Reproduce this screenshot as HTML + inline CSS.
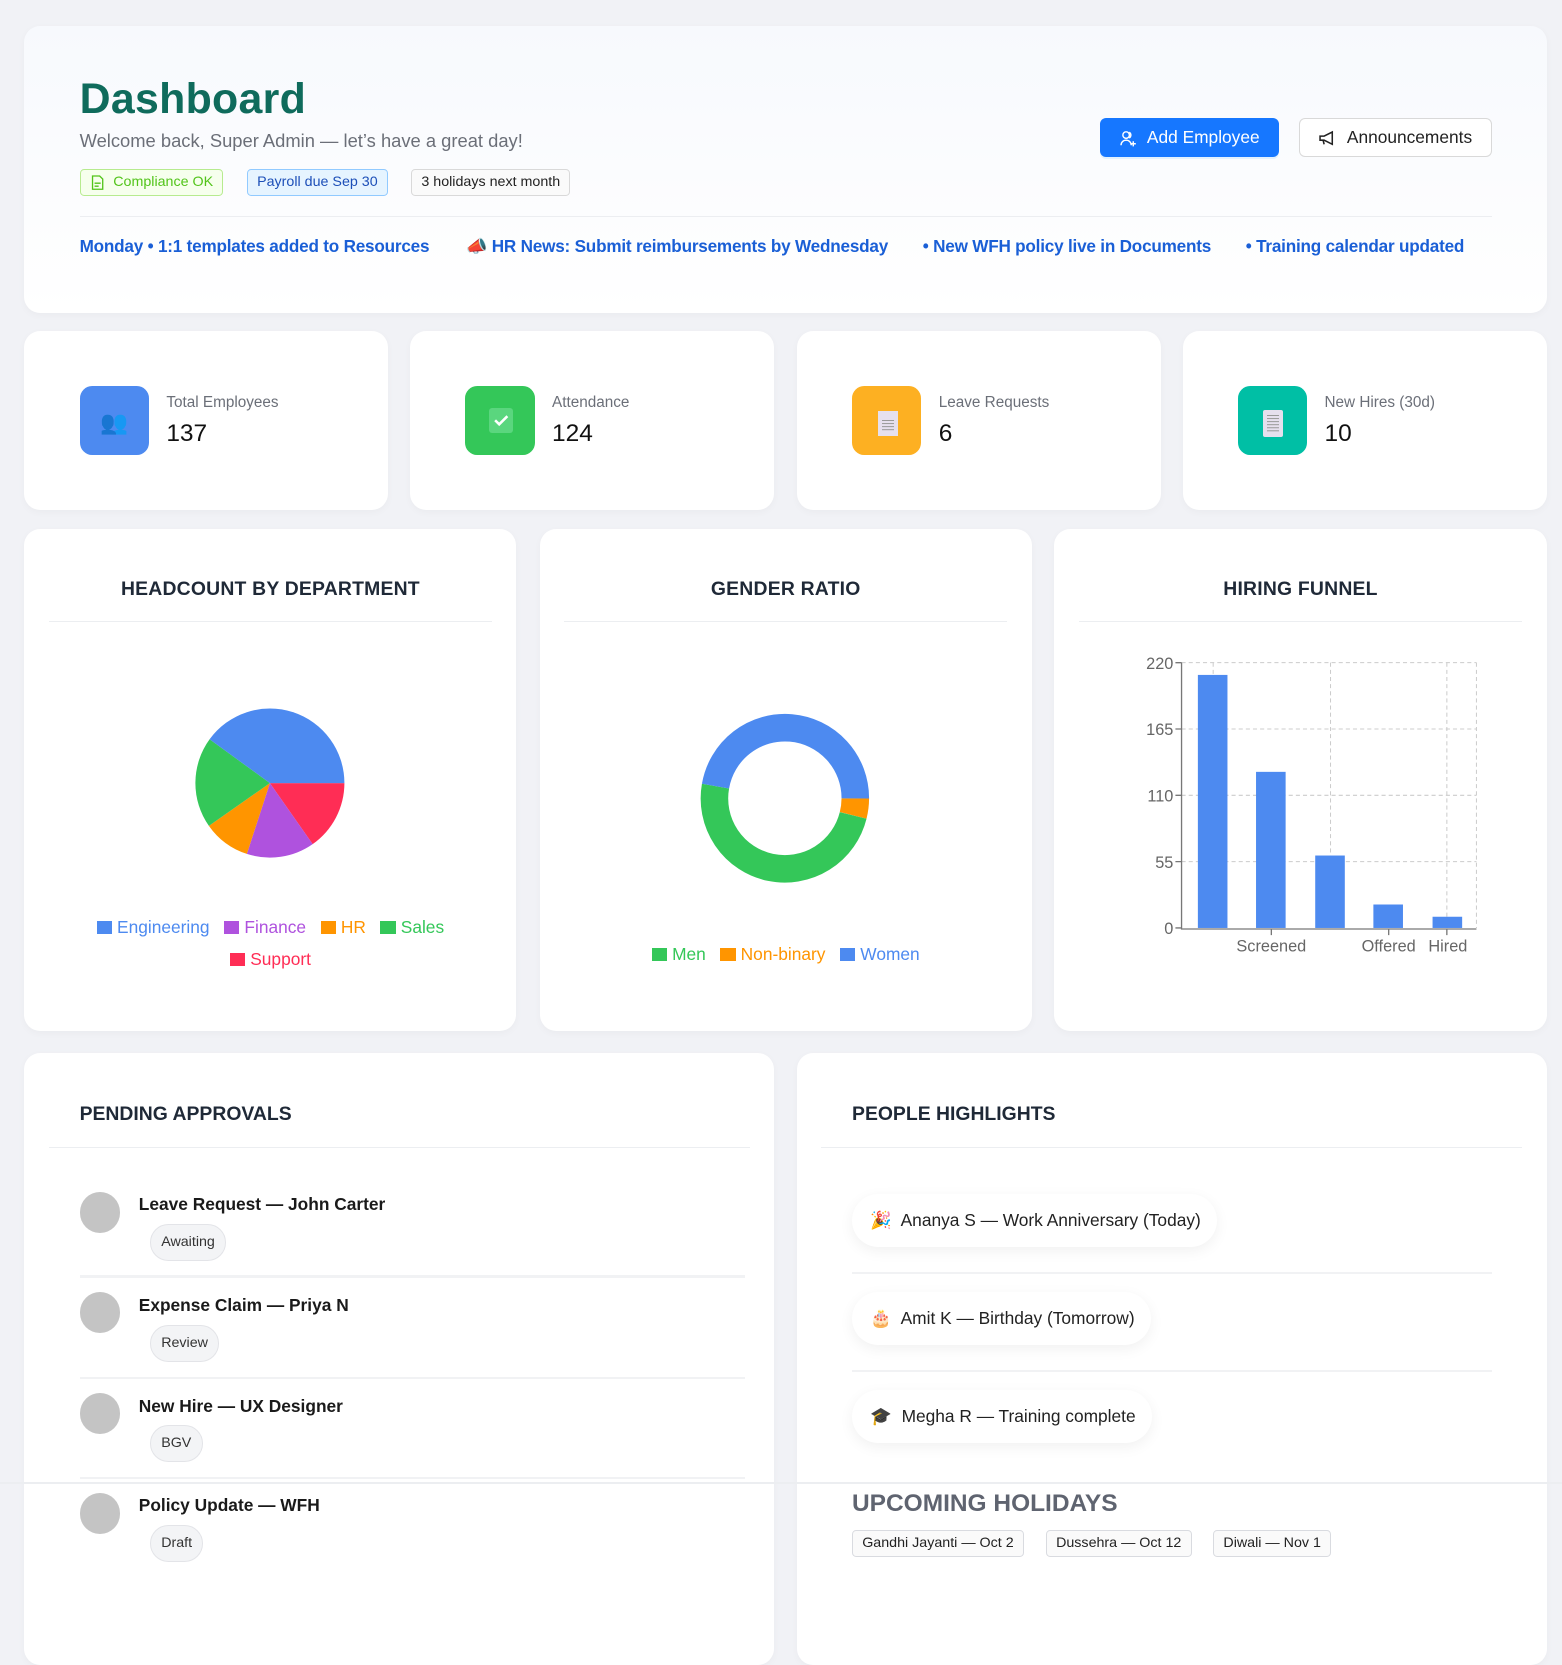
<!DOCTYPE html>
<html><head><meta charset="utf-8">
<style>
*{box-sizing:border-box;margin:0;padding:0}
html,body{width:1562px;height:1600px;overflow:hidden;background:#f1f2f6}
#w{position:absolute;left:0;top:0;width:1531px;height:1568px;zoom:1.0204;font-family:"Liberation Sans","DejaVu Sans",sans-serif;color:#222}
.a{position:absolute}
.card{position:absolute;background:#fff;border-radius:16px;box-shadow:0 2px 8px rgba(0,0,0,.03)}
.t{position:absolute;white-space:nowrap}
.badge{position:absolute;top:166px;height:26px;border-radius:4px;font-size:14px;line-height:24px;padding:0 9px;border:1px solid}
.ic{position:absolute;left:54px;top:54px;width:68px;height:68px;border-radius:12px}
.lab{position:absolute;left:139px;top:62px;font-size:15px;color:#6b6f78}
.num{position:absolute;left:139px;top:88px;font-size:24px;color:#111}
.ct{position:absolute;top:48px;left:0;right:0;text-align:center;font-size:19px;font-weight:bold;color:#1f2937;letter-spacing:.2px}
.hr{position:absolute;height:1px;background:#eceef1}
.av{position:absolute;left:54px;width:40px;height:40px;border-radius:50%;background:#c4c4c4}
.pt{position:absolute;left:112px;font-size:17px;font-weight:bold;color:#1a1a1a}
.chip{position:absolute;left:123px;height:36px;border-radius:18px;background:#f3f4f6;border:1px solid #e3e4e8;font-size:14px;line-height:34px;padding:0 10px;color:#333}
.pill{position:absolute;left:54px;height:52px;border-radius:26px;background:#fff;box-shadow:0 4px 14px rgba(0,0,0,.06);font-size:17px;line-height:52px;padding:0 16px 0 18px;color:#222}
.hol{position:absolute;top:467px;height:27px;border:1px solid #d9dbe0;border-radius:4px;background:#fafafa;font-size:14px;line-height:25px;padding:0 9px;color:#222}
.lg{display:inline-block;width:15px;height:13px;margin-right:5px;vertical-align:-1px}
</style></head><body><div id="w">

<div class="card" style="left:24px;top:25px;width:1492px;height:282px;background:linear-gradient(#f7f9fd,#fff)">
  <div class="t" style="left:54px;top:49px;font-size:42px;font-weight:bold;color:#0f6b5c;letter-spacing:.3px">Dashboard</div>
  <div class="t" style="left:54px;top:102px;font-size:18px;color:#6b6f78">Welcome back, Super Admin — let’s have a great day!</div>
  <div class="badge" style="left:54px;top:141px;color:#52c41a;border-color:#b7eb8f;background:#f6ffed;padding-left:32px"><svg class="a" style="left:10px;top:5px" width="13" height="15" viewBox="0 0 13 15"><path d="M1.5 1h7l3 3v10h-10z M3.5 8h6 M3.5 11h4" fill="none" stroke="#52c41a" stroke-width="1.3"/></svg>Compliance OK</div>
  <div class="badge" style="left:218px;top:141px;color:#1d4fb8;border-color:#91caff;background:#e6f4ff">Payroll due Sep 30</div>
  <div class="badge" style="left:379px;top:141px;color:#222;border-color:#d9d9d9;background:#fafafa">3 holidays next month</div>
  <div class="a" style="left:1054px;top:91px;width:175px;height:38px;border-radius:6px;background:#1677ff;color:#fff;font-size:17px;line-height:38px;padding-left:46px;box-shadow:0 2px 0 rgba(5,145,255,.1)"><svg class="a" style="left:20px;top:11px" width="17" height="17" viewBox="0 0 17 17" fill="none" stroke="#fff" stroke-width="1.4"><circle cx="6" cy="5" r="3.2"/><path d="M1 15c0-3 2.2-5 5-5s5 2 5 5"/><path d="M9 2.2a3.2 3.2 0 0 1 0 5.6"/><path d="M13 11v5M10.5 13.5h5"/></svg>Add Employee</div>
  <div class="a" style="left:1249px;top:91px;width:189px;height:38px;border-radius:6px;background:#fff;border:1px solid #d9d9d9;color:#222;font-size:17px;line-height:36px;padding-left:46px"><svg class="a" style="left:18px;top:10px" width="18" height="16" viewBox="0 0 18 16" fill="none" stroke="#222" stroke-width="1.5"><path d="M2 6h4l8-4v12l-8-4H2z"/><path d="M5 10l1 4"/></svg>Announcements</div>
  <div class="hr" style="left:54px;top:187px;width:1384px"></div>
  <div class="t" style="left:54px;top:206px;font-size:16.8px;font-weight:bold;color:#1a5fd6;letter-spacing:-.2px">Monday • 1:1 templates added to Resources<span style="display:inline-block;width:36px"></span><span style="color:#f08a3c">&#x1F4E3;</span> HR News: Submit reimbursements by Wednesday<span style="display:inline-block;width:34px"></span>• New WFH policy live in Documents<span style="display:inline-block;width:34px"></span>• Training calendar updated</div>
</div>

<div class="card" style="left:24px;top:324px;width:356px;height:176px"><div class="ic" style="background:#4d8af0"><div class="a" style="left:20px;top:24px;font-size:22px;color:#5b2b8c">&#x1F465;</div></div><div class="lab">Total Employees</div><div class="num">137</div></div>
<div class="card" style="left:402px;top:324px;width:357px;height:176px"><div class="ic" style="background:#34c759"><div class="a" style="left:23px;top:22px;width:24px;height:24px;border-radius:3px;background:#5ad67e"><svg width="24" height="24"><path d="M6 12l4 4 8-8" fill="none" stroke="#fff" stroke-width="2.5"/></svg></div></div><div class="lab">Attendance</div><div class="num">124</div></div>
<div class="card" style="left:781px;top:324px;width:357px;height:176px"><div class="ic" style="background:#fdb022"><div class="a" style="left:25px;top:25px;width:20px;height:24px;background:#e6e0ee"><div class="a" style="left:4px;top:9px;width:12px;height:1px;background:#999;box-shadow:0 3px #999,0 6px #999,0 9px #999"></div></div></div><div class="lab">Leave Requests</div><div class="num">6</div></div>
<div class="card" style="left:1159px;top:324px;width:357px;height:176px"><div class="ic" style="background:#00bfa5"><div class="a" style="left:25px;top:24px;width:19px;height:26px;background:#e6e0ee;border-radius:2px"><div class="a" style="left:4px;top:5px;width:11px;height:1px;background:#999;box-shadow:0 3px #999,0 6px #999,0 9px #999,0 12px #999,0 15px #999"></div></div></div><div class="lab">New Hires (30d)</div><div class="num">10</div></div>

<div class="card" style="left:24px;top:518px;width:482px;height:492px">
  <div class="ct">HEADCOUNT BY DEPARTMENT</div>
  <div class="hr" style="left:24px;top:91px;width:434px"></div>
  <svg class="a" style="left:0;top:0" width="482" height="492" viewBox="24 518 482 492">
    <path d="M265 767L338 767A73 73 0 0 1 306.9 826.8Z" fill="#ff2d55"/>
    <path d="M265 767L306.9 826.8A73 73 0 0 1 242.4 836.4Z" fill="#af52de"/>
    <path d="M265 767L242.4 836.4A73 73 0 0 1 205.2 808.9Z" fill="#ff9500"/>
    <path d="M265 767L205.2 808.9A73 73 0 0 1 205.9 724.1Z" fill="#34c759"/>
    <path d="M265 767L205.9 724.1A73 73 0 0 1 338 767Z" fill="#4d8af0"/>
  </svg>
  <div class="t" style="left:0;right:0;top:376px;text-align:center;font-size:17px;line-height:31px;white-space:normal;padding:0 60px"><span style="color:#4d8af0"><i class="lg" style="background:#4d8af0"></i>Engineering</span>&nbsp;&nbsp; <span style="color:#af52de"><i class="lg" style="background:#af52de"></i>Finance</span>&nbsp;&nbsp; <span style="color:#ff9500"><i class="lg" style="background:#ff9500"></i>HR</span>&nbsp;&nbsp; <span style="color:#34c759"><i class="lg" style="background:#34c759"></i>Sales</span><br><span style="color:#ff2d55"><i class="lg" style="background:#ff2d55"></i>Support</span></div>
</div>

<div class="card" style="left:529px;top:518px;width:482px;height:492px">
  <div class="ct">GENDER RATIO</div>
  <div class="hr" style="left:24px;top:91px;width:434px"></div>
  <svg class="a" style="left:0;top:0" width="482" height="492" viewBox="529 518 482 492" fill="none" stroke-width="27">
    <path d="M838 782A69 69 0 0 1 835.9 798.7" stroke="#ff9500"/>
    <path d="M835.9 798.7A69 69 0 0 1 701 770" stroke="#34c759"/>
    <path d="M701 770A69 69 0 0 1 838 782" stroke="#4d8af0"/>
  </svg>
  <div class="t" style="left:0;right:0;top:407px;text-align:center;font-size:17px"><span style="color:#34c759"><i class="lg" style="background:#34c759"></i>Men</span>&nbsp;&nbsp; <span style="color:#ff9500"><i class="lg" style="background:#ff9500"></i>Non-binary</span>&nbsp;&nbsp; <span style="color:#4d8af0"><i class="lg" style="background:#4d8af0"></i>Women</span></div>
</div>

<div class="card" style="left:1033px;top:518px;width:483px;height:492px">
  <div class="ct">HIRING FUNNEL</div>
  <div class="hr" style="left:24px;top:91px;width:435px"></div>
  <svg class="a" style="left:0;top:0" width="483" height="492" viewBox="1033 518 483 492" font-family="Liberation Sans, sans-serif" font-size="16" fill="#666">
    <g stroke="#ccc" stroke-dasharray="4 3" stroke-width="1">
      <path d="M1158 649H1447M1158 714H1447M1158 779H1447M1158 844H1447"/>
      <path d="M1189 649V909M1304 649V909M1418 649V909M1447 649V909"/>
    </g>
    <g fill="#4d8af0"><rect x="1174" y="661" width="29" height="248"/><rect x="1231" y="756" width="29" height="153"/><rect x="1289" y="838" width="29" height="71"/><rect x="1346" y="886" width="29" height="23"/><rect x="1404" y="898" width="29" height="11"/></g>
    <g stroke="#777" stroke-width="1.3" fill="none"><path d="M1158 649V910H1447"/><path d="M1152 649h6M1152 714h6M1152 779h6M1152 844h6M1152 909h6M1246 910v6M1361 910v6M1418 910v6"/></g>
    <g text-anchor="end"><text x="1150" y="655">220</text><text x="1150" y="720">165</text><text x="1150" y="785">110</text><text x="1150" y="850">55</text><text x="1150" y="915">0</text></g>
    <g text-anchor="middle"><text x="1246" y="932">Screened</text><text x="1361" y="932">Offered</text><text x="1419" y="932">Hired</text></g>
  </svg>
</div>

<div class="card" style="left:24px;top:1032px;width:735px;height:600px">
  <div class="t" style="left:54px;top:49px;font-size:19px;font-weight:bold;color:#1f2937">PENDING APPROVALS</div>
  <div class="hr" style="left:24px;top:92px;width:687px"></div>
  <div class="av" style="top:136px"></div><div class="pt" style="top:138px">Leave Request — John Carter</div><div class="chip" style="top:168px">Awaiting</div>
  <div class="hr" style="left:54px;top:218px;width:652px;height:2px;background:#f1f2f4"></div>
  <div class="av" style="top:234px"></div><div class="pt" style="top:237px">Expense Claim — Priya N</div><div class="chip" style="top:267px">Review</div>
  <div class="hr" style="left:54px;top:317px;width:652px;height:2px;background:#f1f2f4"></div>
  <div class="av" style="top:333px"></div><div class="pt" style="top:336px">New Hire — UX Designer</div><div class="chip" style="top:365px">BGV</div>
  <div class="hr" style="left:54px;top:415px;width:652px;height:2px;background:#f1f2f4"></div>
  <div class="av" style="top:431px"></div><div class="pt" style="top:433px">Policy Update — WFH</div><div class="chip" style="top:463px">Draft</div>
</div>

<div class="card" style="left:781px;top:1032px;width:735px;height:600px">
  <div class="t" style="left:54px;top:49px;font-size:19px;font-weight:bold;color:#1f2937">PEOPLE HIGHLIGHTS</div>
  <div class="hr" style="left:24px;top:92px;width:687px"></div>
  <div class="pill" style="top:138px">&#x1F389;&nbsp; Ananya S — Work Anniversary (Today)</div>
  <div class="hr" style="left:54px;top:215px;width:627px;height:2px;background:#f1f2f4"></div>
  <div class="pill" style="top:234px">&#x1F382;&nbsp; Amit K — Birthday (Tomorrow)</div>
  <div class="hr" style="left:54px;top:311px;width:627px;height:2px;background:#f1f2f4"></div>
  <div class="pill" style="top:330px">&#x1F393;&nbsp; Megha R — Training complete</div>
  <div class="t" style="left:54px;top:428px;font-size:24px;font-weight:bold;color:#5f6470">UPCOMING HOLIDAYS</div>
  <div class="hol" style="left:54px">Gandhi Jayanti — Oct 2</div>
  <div class="hol" style="left:244px">Dussehra — Oct 12</div>
  <div class="hol" style="left:408px">Diwali — Nov 1</div>
</div>

<div class="a" style="left:0;top:1452px;width:1531px;height:2px;background:#eceef1"></div>
</div></body></html>
